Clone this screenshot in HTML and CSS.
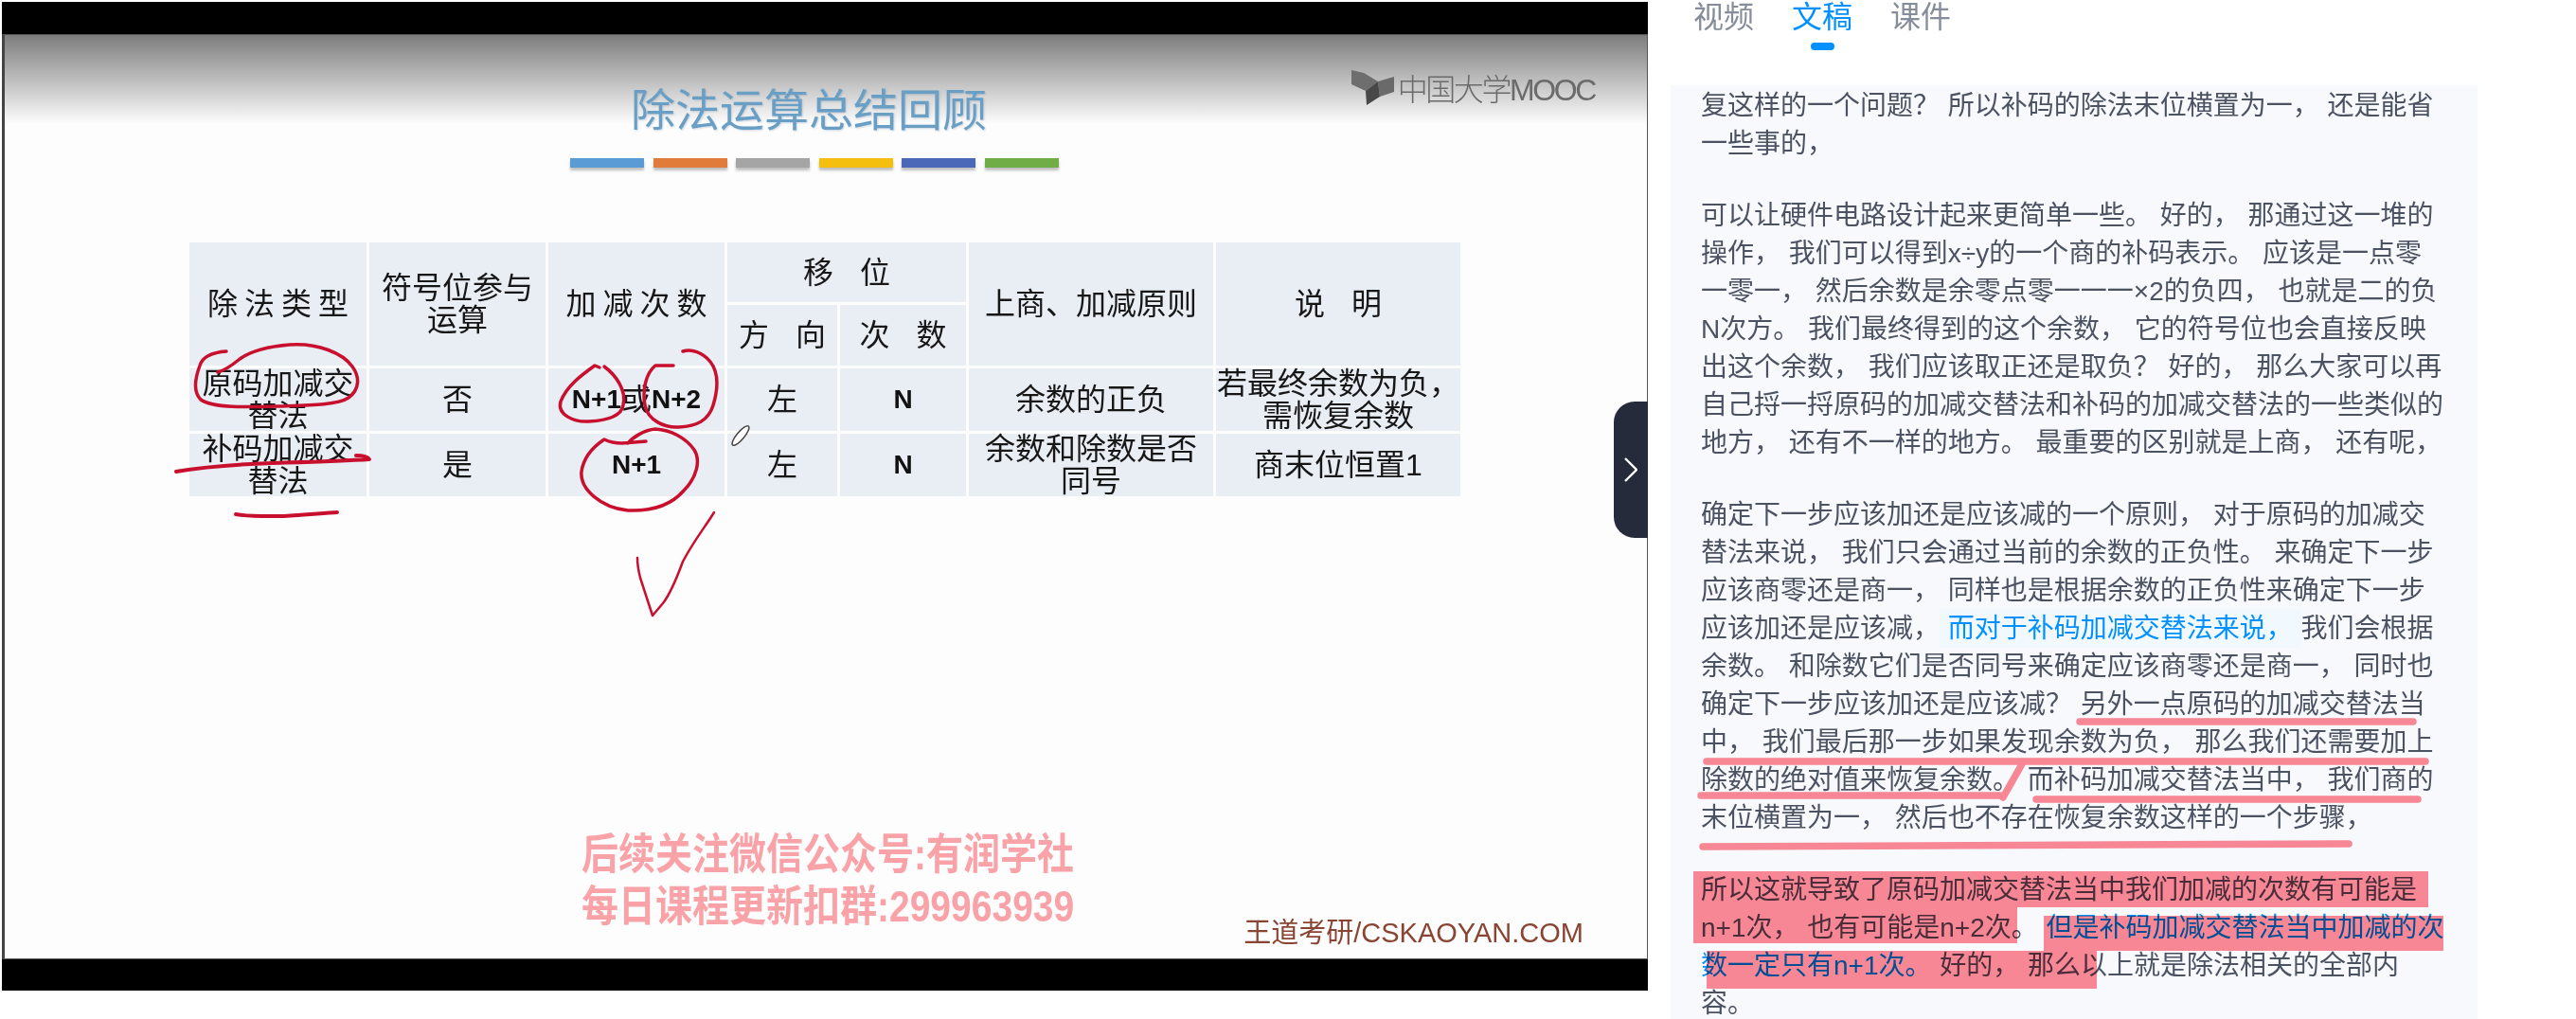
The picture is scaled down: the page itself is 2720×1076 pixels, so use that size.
FILE: index.html
```html
<!DOCTYPE html>
<html lang="zh-CN">
<head>
    <meta charset="UTF-8">
    <title>除法运算总结回顾</title>
    <link rel="stylesheet" href="styles.css">
</head>
<body>
    <div class="page">
        <!-- 视频区域 -->
        <section class="video">
            <div class="slide">
                <div class="logo">
                    <svg class="logo-icon" viewBox="1427 75 45 37" width="45" height="37">
                        <polygon points="1427,75 1440,78 1455,87 1442,97 1427,90" fill="#6e6e6e"/>
                        <polygon points="1455,87 1472,82 1472,98 1457,103" fill="#6a6a6a"/>
                        <polygon points="1442,97 1455,87 1457,103 1443,112" fill="#484848"/>
                    </svg>
                    <span>中国大学MOOC</span>
                </div>
                <h1 class="slide-title">除法运算总结回顾</h1>
                <div class="color-bars">
                    <i class="bar bar-blue"></i>
                    <i class="bar bar-orange"></i>
                    <i class="bar bar-gray"></i>
                    <i class="bar bar-yellow"></i>
                    <i class="bar bar-navy"></i>
                    <i class="bar bar-green"></i>
                </div>
                <div class="summary">
                    <div class="cell span-rows sp-small">除法类型</div>
                    <div class="cell span-rows">符号位参与运算</div>
                    <div class="cell span-rows sp-small">加减次数</div>
                    <div class="cell span-cols sp-wide">移位</div>
                    <div class="cell span-rows">上商、加减原则</div>
                    <div class="cell span-rows sp-wide">说明</div>
                    <div class="cell sp-wide">方向</div>
                    <div class="cell sp-wide">次数</div>

                    <div class="cell">原码加减交替法</div>
                    <div class="cell">否</div>
                    <div class="cell"><span class="num">N+1</span>或<span class="num">N+2</span></div>
                    <div class="cell">左</div>
                    <div class="cell"><span class="num">N</span></div>
                    <div class="cell">余数的正负</div>
                    <div class="cell">若最终余数为负，需恢复余数</div>

                    <div class="cell">补码加减交替法</div>
                    <div class="cell">是</div>
                    <div class="cell"><span class="num">N+1</span></div>
                    <div class="cell">左</div>
                    <div class="cell"><span class="num">N</span></div>
                    <div class="cell cell-tight">余数和除数是否同号</div>
                    <div class="cell">商末位恒置1</div>
                </div>
                <div class="slide-foot">
                    <div class="watermark">
                        <div>后续关注微信公众号:有润学社</div>
                        <div>每日课程更新扣群:299963939</div>
                    </div>
                    <div class="credit">王道考研/CSKAOYAN.COM</div>
                </div>
            </div>

            <!-- 老师的手写批注 -->
            <svg class="ink" viewBox="2 2 1738 1044">
                <g fill="none" stroke="#c8102e" stroke-width="3.5" stroke-linecap="round" stroke-linejoin="round">
                    <path d="M239 371C224 372 214 376 211 386C205 402 204 414 212 422C224 431 262 430 293 429C325 428 356 428 368 420C380 411 380 398 372 387C362 373 336 362 306 364C282 366 262 372 252 380C242 388 234 392 230 393"/>
                    <path d="M633 388L628 386C614 396 598 408 592 424C588 438 606 446 622 445C640 444 656 440 658 428C662 412 650 396 638 387"/>
                    <path d="M711 386L692 386C682 394 678 412 681 428C684 444 702 452 717 451C736 450 748 444 753 428C759 408 758 392 750 382C742 372 730 368 721 371"/>
                    <path d="M682 466L657 468C648 468 642 466 638 464C626 472 616 484 614 498C612 516 634 536 663 539C690 540 710 532 722 518C736 504 740 486 733 475C724 462 708 454 692 453C680 454 668 462 663 468"/>
                    <path d="M186 498C220 492 256 490 287 489C320 488 360 487 390 485C388 482 382 481 376 481" stroke-width="4"/>
                    <path d="M249 543C268 546 284 545 300 545C320 544 340 542 356 541" stroke-width="4"/>
                    <path d="M754 541C745 556 733 570 721 593C714 612 708 627 700 637L689 650L676 610C674 602 673 595 673 589" stroke-width="2.5"/>
                </g>
                <ellipse class="pen" cx="782" cy="460" rx="4" ry="13" transform="rotate(40 782 460)"/>
            </svg>

            <!-- 收起按钮 -->
            <button class="collapse" type="button">
                <svg viewBox="0 0 14 26" width="14" height="26">
                    <path d="M1 1L13 13L1 25" fill="none" stroke="#fff" stroke-width="2.4"/>
                </svg>
            </button>
        </section>

        <aside class="side">
            <nav class="tabs">
                <a class="tab">视频</a>
                <a class="tab tab-active">文稿<i class="tab-mark"></i></a>
                <a class="tab">课件</a>
            </nav>
            <div class="transcript">
                <p>复这样的一个问题？ 所以补码的除法末位横置为一， 还是能省一些事的，</p>
                <p>可以让硬件电路设计起来更简单一些。 好的， 那通过这一堆的操作， 我们可以得到x÷y的一个商的补码表示。 应该是一点零一零一， 然后余数是余零点零一一一×2的负四， 也就是二的负N次方。 我们最终得到的这个余数， 它的符号位也会直接反映出这个余数， 我们应该取正还是取负？ 好的， 那么大家可以再自己捋一捋原码的加减交替法和补码的加减交替法的一些类似的地方， 还有不一样的地方。 最重要的区别就是上商， 还有呢，</p>
                <p>确定下一步应该加还是应该减的一个原则， 对于原码的加减交替法来说， 我们只会通过当前的余数的正负性。 来确定下一步应该商零还是商一， 同样也是根据余数的正负性来确定下一步应该加还是应该减，<span class="current"> 而对于补码加减交替法来说， </span>我们会根据余数。 和除数它们是否同号来确定应该商零还是商一， 同时也确定下一步应该加还是应该减？ 另外一点原码的加减交替法当中， 我们最后那一步如果发现余数为负， 那么我们还需要加上除数的绝对值来恢复余数。 而补码加减交替法当中， 我们商的末位横置为一， 然后也不存在恢复余数这样的一个步骤，</p>
                <p>所以这就导致了原码加减交替法当中我们加减的次数有可能是n+1次， 也有可能是n+2次。 <span class="blue">但是补码加减交替法当中加减的次数一定只有n+1次。</span> 好的， 那么以上就是除法相关的全部内容。</p>

                <!-- 用户的划线和高亮 -->
                <svg class="marks" viewBox="1764 90 852 986">
                    <g fill="#ff8a95">
                        <rect x="1788" y="920" width="776" height="38"/>
                        <rect x="1788" y="958" width="342" height="38"/>
                        <rect x="2158" y="967" width="422" height="37"/>
                        <rect x="1802" y="1004" width="412" height="40"/>
                    </g>
                    <g fill="none" stroke="#ff8a95" stroke-width="7.5" stroke-linecap="round">
                        <path d="M2196 762H2548"/>
                        <path d="M1802 804H2561"/>
                        <path d="M1796 840H2112"/>
                        <path d="M2136 805L2115 842"/>
                        <path d="M2150 844H2553"/>
                        <path d="M1798 894L2480 891"/>
                    </g>
                </svg>
            </div>
        </aside>
    </div>
</body>
</html>
```

FILE: styles.css
```css
* {
    box-sizing: border-box;
}

body {
    margin: 0;
    background: #fff;
    font-family: "Liberation Sans", "Noto Sans CJK SC", sans-serif;
}

.page {
    display: flex;
    width: 2720px;
    height: 1076px;
    overflow: hidden;
}

/* 视频区域 */
.video {
    position: relative;
    display: flex;
    flex-direction: column;
    flex: none;
    width: 1738px;
    height: 1044px;
    margin: 2px 0 0 2px;
    padding: 34px 0 33px;
    background: #000;
}

.slide {
    position: relative;
    display: flex;
    flex-direction: column;
    flex: 1;
    border: 1px solid #555;
    border-left: 3px solid #444;
    background: linear-gradient(#7d7d7d, #fdfdfd 94px) #fdfdfd;
}

.logo {
    position: absolute;
    top: 37px;
    right: 55px;
    display: flex;
    align-items: flex-start;
    gap: 4px;
    color: #6b6b6b;
    font-size: 32px;
    font-weight: 300;
    line-height: 36px;
    letter-spacing: -2.4px;
}

.logo span {
    margin-top: 3px;
}

.slide-title {
    margin: 57px 0 0 661px;
    color: #6a9fc5;
    font-size: 47px;
    font-weight: 400;
    line-height: 46px;
    letter-spacing: 0;
    text-shadow: 1px 1px 2px rgba(60, 100, 140, 0.25);
}

.color-bars {
    display: flex;
    justify-content: space-between;
    width: 516px;
    margin: 27px 0 0 597px;
}

.bar {
    width: 78px;
    height: 10px;
    box-shadow: 0 3px 3px rgba(0, 0, 0, 0.25);
}

.bar-blue { background: #5b9bd5; }
.bar-orange { background: #e07b39; }
.bar-gray { background: #a5a5a5; }
.bar-yellow { background: #f5bf0f; }
.bar-navy { background: #4a67b8; }
.bar-green { background: #70ad47; }

/* 表格 */
.summary {
    display: grid;
    grid-template-columns: 187px 186px 186px 116px 133px 258px 258px;
    grid-template-rows: 63px 64px 66px 66px;
    gap: 3px;
    width: 1342px;
    margin: 79px 0 0 195px;
    color: #171717;
    font-size: 32px;
    line-height: 34px;
}

.cell {
    display: flex;
    align-items: center;
    justify-content: center;
    background: #e9edf4;
    text-align: center;
}

.cell-tight {
    padding: 0 14px;
}

.span-rows {
    grid-row: span 2;
}

.span-cols {
    grid-column: span 2;
}

.sp-small {
    letter-spacing: 7px;
    text-indent: 7px;
}

.sp-wide {
    letter-spacing: 28px;
    text-indent: 28px;
    white-space: nowrap;
}

.num {
    color: #111;
    font-size: 28px;
    font-weight: 700;
}

/* 底部水印 */
.slide-foot {
    display: flex;
    align-items: flex-end;
    margin-top: auto;
    padding: 0 67px 10px 609px;
}

.watermark {
    margin-bottom: 17px;
    color: #f9a3a9;
    font-size: 39px;
    font-weight: 700;
    line-height: 47px;
    white-space: nowrap;
    transform: scale(1, 1.17);
    transform-origin: left bottom;
}

.credit {
    margin-left: auto;
    color: #8a4532;
    font-size: 29px;
    line-height: 34px;
    white-space: nowrap;
}

.ink {
    position: absolute;
    top: 0;
    left: 0;
    width: 1738px;
    height: 1044px;
    pointer-events: none;
}

.pen {
    fill: #fff;
    stroke: #444;
    stroke-width: 1.5;
}

.collapse {
    position: absolute;
    top: 422px;
    right: 0;
    display: flex;
    align-items: center;
    justify-content: center;
    width: 36px;
    height: 144px;
    padding: 0;
    border: none;
    border-radius: 22px 0 0 22px;
    background: #252b3a;
}

/* 右侧文稿 */
.side {
    flex: 1;
    min-width: 0;
}

.tabs {
    display: flex;
    align-items: flex-start;
    gap: 40px;
    height: 90px;
    padding-left: 48px;
}

.tab {
    display: flex;
    flex-direction: column;
    align-items: center;
    color: #868d9a;
    font-size: 32px;
    line-height: 36px;
}

.tab-active {
    color: #0091ff;
}

.tab-mark {
    width: 25px;
    height: 8px;
    margin-top: 9px;
    border-radius: 4px;
    background: #0091ff;
}

.transcript {
    position: relative;
    width: 852px;
    height: 986px;
    margin-left: 24px;
    padding: 2px 32px 0;
    overflow: hidden;
    background: #f7f9fd;
    color: #4b5262;
    font-size: 28px;
    line-height: 40px;
    word-spacing: 1px;
}

.transcript p {
    margin: 0 0 36px;
}

.current {
    padding: 5px 0;
    background: #f2f9fe;
    color: #0091ff;
}

.blue {
    color: #0091ff;
}

.marks {
    position: absolute;
    top: 0;
    left: 0;
    width: 852px;
    height: 986px;
    mix-blend-mode: multiply;
    pointer-events: none;
}
```
